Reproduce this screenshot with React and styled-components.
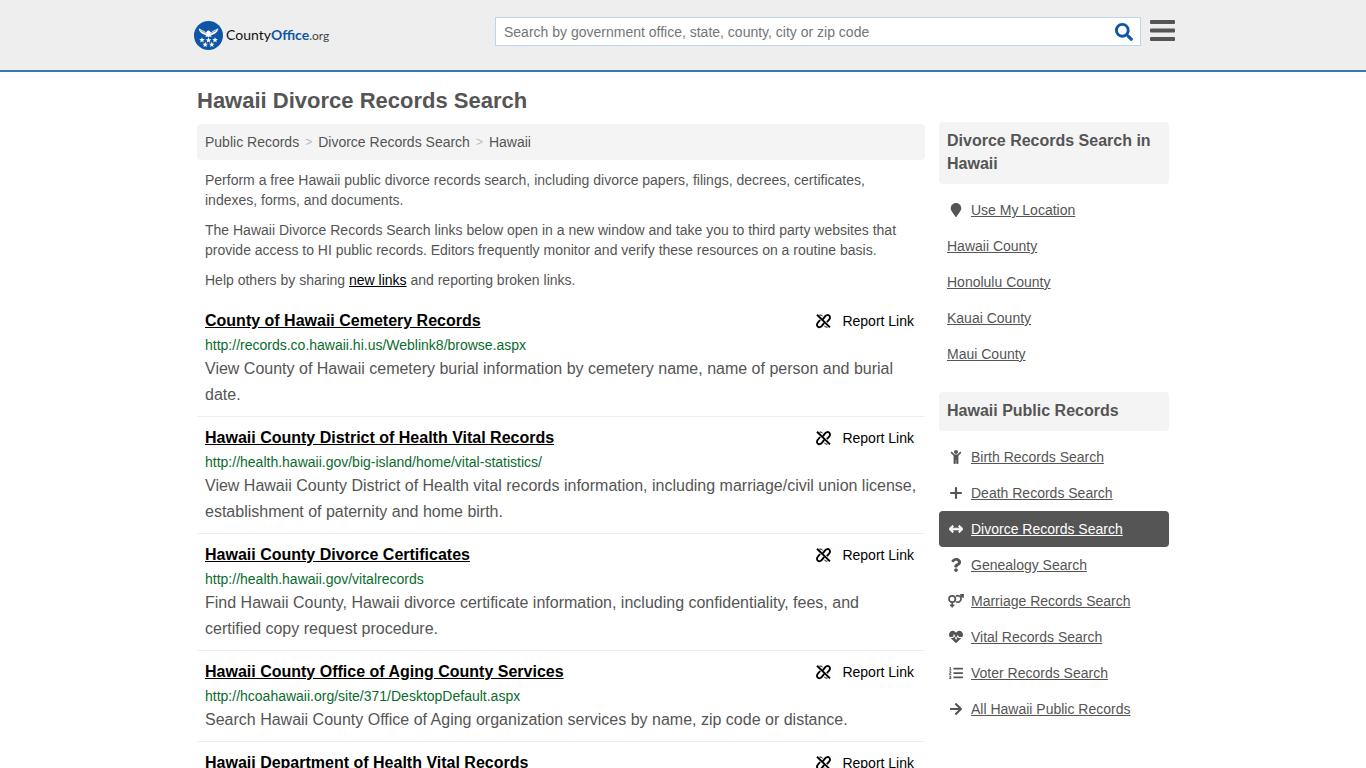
import React, { useState } from "react";
import styled, { createGlobalStyle } from "styled-components";
import {
  FaArrowRight,
  FaChild,
  FaHeartbeat,
  FaListOl,
  FaMapMarker,
  FaQuestion,
  FaSearch,
} from "react-icons/fa";
import { FaArrowsLeftRight } from "react-icons/fa6";

const GlobalStyle = createGlobalStyle`
  * {
    box-sizing: border-box;
  }

  body {
    margin: 0;
    background: #fff;
    color: #555;
    font-family: "Liberation Sans", Arial, sans-serif;
    font-size: 14px;
    line-height: 20px;
  }
`;

const Header = styled.header`
  background: #eee;
  border-bottom: 2px solid #337ab7;
`;

const HeaderInner = styled.div`
  display: flex;
  align-items: flex-start;
  justify-content: space-between;
  width: 100%;
  max-width: 984px;
  height: 70px;
  margin: 0 auto;
  padding-top: 17px;
`;

const Logo = styled.a`
  display: flex;
  align-items: center;
  gap: 3px;
  padding: 3px 0 0 3px;
  color: #111;
  font-family: Lato, sans-serif;
  font-size: 14px;
  line-height: 30px;
  text-decoration: none;

  b {
    color: #0f55a5;
  }

  small {
    color: #444;
    font-size: 12px;
  }
`;

const HeaderTools = styled.div`
  display: flex;
  gap: 9px;
  width: 680px;
`;

const SearchForm = styled.form`
  display: flex;
  flex: 1;
  height: 29px;
  background: #fff;
  border: 1px solid #bcd6ea;
`;

const SearchInput = styled.input`
  flex: 1;
  min-width: 0;
  padding: 0 8px;
  border: 0;
  outline: 0;
  background: transparent;
  color: #555;
  font: inherit;

  &::placeholder {
    color: #757575;
    opacity: 1;
  }
`;

const IconButton = styled.button`
  display: flex;
  align-items: center;
  justify-content: center;
  width: 32px;
  padding: 0;
  border: 0;
  background: none;
  color: #0f55a5;
  cursor: pointer;
`;

const MenuButton = styled(IconButton)`
  width: 25px;
  height: 27px;
  color: #555;
`;

const Page = styled.div`
  display: flex;
  gap: 14px;
  max-width: 972px;
  margin: 0 auto;
`;

const Main = styled.main`
  flex: 1;
  min-width: 0;
`;

const Title = styled.h1`
  margin: 0;
  padding: 15px 0 9px;
  font-size: 22px;
  line-height: 28px;
`;

const Breadcrumb = styled.nav`
  display: flex;
  gap: 6px;
  margin-bottom: 10px;
  padding: 8px;
  border-radius: 4px;
  background: #f4f4f4;

  a {
    color: #555;
    text-decoration: none;
  }

  span {
    color: #bbb;
    font-size: 12px;
  }
`;

const P = styled.p`
  margin: 0 8px 10px;

  a {
    color: #000;
  }
`;

const Item = styled.article`
  padding: 10px 8px 8px;
  border-bottom: 1px solid #eee;
`;

const ItemHead = styled.div`
  display: flex;
  align-items: center;
  justify-content: space-between;
  margin-bottom: 2px;
  padding-right: 3px;
  line-height: 22px;
`;

const ItemTitle = styled.h2`
  margin: 0;
  font-size: 16px;

  a {
    color: #000;
  }
`;

const Report = styled.a`
  display: flex;
  align-items: center;
  gap: 11px;
  color: #000;
  text-decoration: none;
`;

const Url = styled.div`
  color: #0a6b2d;
  line-height: 22px;
`;

const Description = styled.p`
  margin: 0;
  font-size: 16px;
  line-height: 26px;
`;

const Sidebar = styled.aside`
  width: 230px;
  padding-top: 50px;
`;

const Panel = styled.section`
  margin-bottom: 20px;
`;

const PanelTitle = styled.h3`
  margin: 0 0 8px;
  padding: 7px 8px 9px;
  border-radius: 4px;
  background: #f4f4f4;
  font-size: 16px;
  line-height: 23px;
`;

const PanelLink = styled.a`
  display: flex;
  align-items: center;
  gap: 6px;
  padding: 8px;
  border-radius: 4px;
  background: ${(props) => (props.$active ? "#555" : "transparent")};
  color: ${(props) => (props.$active ? "#fff" : "#555")};
`;

const IconBox = styled.span`
  display: flex;
  justify-content: center;
  width: 18px;
  font-size: 14px;
`;

const STAR = "0,-2.8 .8,-.9 2.8,-.8 1.2,.5 1.8,2.5 0,1.3 -1.8,2.5 -1.2,.5 -2.8,-.8 -.8,-.9";

function EagleLogo() {
  return (
    <svg width="29" height="29" viewBox="0 0 29 29" aria-hidden="true">
      <circle cx="14.5" cy="14.5" r="14.5" fill="#0f55a5" />
      <g fill="#fff">
        <path d="M4.6 7.2c2.5 1.7 5.8 2.2 7.5 4.3l1.3-1.7 1.8-.3.8 1 .9 1c1.7-2.1 5-2.6 7.5-4.3-.4 2.3-1.4 3.9-3 5-1.5 1-3.3 1.5-4.7 2.2l1.2 1.4-2.3-.3-1.1 1-1.1-1-2.3.3 1.2-1.4c-1.4-.7-3.2-1.2-4.7-2.2-1.6-1.1-2.6-2.7-3-5z" />
        {[
          [8, 19],
          [14.5, 19.2],
          [21, 19],
          [11.2, 23.6],
          [17.8, 23.6],
        ].map(([x, y]) => (
          <polygon key={x} points={STAR} transform={`translate(${x} ${y})`} />
        ))}
      </g>
      <path
        d="M6.5 9.2c2 1.7 4.6 1.6 6 3.6M22.5 9.2c-2 1.7-4.6 1.6-6 3.6"
        fill="none"
        stroke="#0f55a5"
        strokeWidth=".6"
      />
    </svg>
  );
}

function BrokenLinkIcon() {
  return (
    <svg
      width="15"
      height="16"
      viewBox="0 0 15 16"
      fill="none"
      stroke="currentColor"
      strokeWidth="1.9"
      aria-hidden="true"
    >
      <path d="M1 1.8L14 14.4" />
      <path d="M6.8 6.3l2.3-2.9c1.2-1.5 3-1.8 4.1-.8 1.1 1 1.1 2.7-.1 4L10.9 9.2" />
      <path d="M8.2 9.9l-2.3 2.9c-1.2 1.5-3 1.8-4.1.8-1.1-1-1.1-2.7.1-4L4.1 7" />
      <path d="M3.4 2.2c1.1-.3 2.3 0 3.2.9M11.6 14c-1.1.3-2.3 0-3.2-.9" strokeWidth="1" />
    </svg>
  );
}

function PlusIcon() {
  return (
    <svg
      width="14"
      height="14"
      viewBox="0 0 14 14"
      stroke="currentColor"
      strokeWidth="2.2"
      strokeLinecap="round"
      aria-hidden="true"
    >
      <path d="M7 2v10M2 7h10" />
    </svg>
  );
}

function MarriageIcon() {
  return (
    <svg
      width="16"
      height="14"
      viewBox="0 0 16 14"
      fill="none"
      stroke="currentColor"
      strokeWidth="1.7"
      aria-hidden="true"
    >
      <circle cx="4.2" cy="5" r="3.2" />
      <path d="M4.2 8.2v5.4M2 11.3h4.4M8 2.2a3.2 3.2 0 1 1 0 5.4M12 3.6L14.8.9M12.2.9h2.9v2.9" />
    </svg>
  );
}

const counties = ["Hawaii County", "Honolulu County", "Kauai County", "Maui County"];

const records = [
  { name: "Birth Records Search", icon: <FaChild /> },
  { name: "Death Records Search", icon: <PlusIcon /> },
  {
    name: "Divorce Records Search",
    icon: <FaArrowsLeftRight stroke="currentColor" strokeWidth="24" />,
    active: true,
  },
  { name: "Genealogy Search", icon: <FaQuestion /> },
  { name: "Marriage Records Search", icon: <MarriageIcon /> },
  { name: "Vital Records Search", icon: <FaHeartbeat /> },
  { name: "Voter Records Search", icon: <FaListOl /> },
  { name: "All Hawaii Public Records", icon: <FaArrowRight /> },
];

const results = [
  {
    title: "County of Hawaii Cemetery Records",
    url: "http://records.co.hawaii.hi.us/Weblink8/browse.aspx",
    text: "View County of Hawaii cemetery burial information by cemetery name, name of person and burial date.",
  },
  {
    title: "Hawaii County District of Health Vital Records",
    url: "http://health.hawaii.gov/big-island/home/vital-statistics/",
    text: "View Hawaii County District of Health vital records information, including marriage/civil union license, establishment of paternity and home birth.",
  },
  {
    title: "Hawaii County Divorce Certificates",
    url: "http://health.hawaii.gov/vitalrecords",
    text: "Find Hawaii County, Hawaii divorce certificate information, including confidentiality, fees, and certified copy request procedure.",
  },
  {
    title: "Hawaii County Office of Aging County Services",
    url: "http://hcoahawaii.org/site/371/DesktopDefault.aspx",
    text: "Search Hawaii County Office of Aging organization services by name, zip code or distance.",
  },
  { title: "Hawaii Department of Health Vital Records" },
];

function SiteHeader() {
  const [query, setQuery] = useState("");

  return (
    <Header>
      <HeaderInner>
        <Logo href="#">
          <EagleLogo />
          <span>
            County<b>Office</b>
            <small>.org</small>
          </span>
        </Logo>
        <HeaderTools>
          <SearchForm onSubmit={(e) => e.preventDefault()}>
            <SearchInput
              type="text"
              aria-label="Search"
              placeholder="Search by government office, state, county, city or zip code"
              value={query}
              onChange={(e) => setQuery(e.target.value)}
            />
            <IconButton type="submit" aria-label="Search">
              <FaSearch size={18} />
            </IconButton>
          </SearchForm>
          <MenuButton type="button" aria-label="Menu">
            <svg width="25" height="21" viewBox="0 0 25 21" fill="currentColor">
              <rect width="25" height="4" rx="1" />
              <rect y="8.5" width="25" height="4" rx="1" />
              <rect y="17" width="25" height="4" rx="1" />
            </svg>
          </MenuButton>
        </HeaderTools>
      </HeaderInner>
    </Header>
  );
}

function Result({ title, url, text }) {
  return (
    <Item>
      <ItemHead>
        <ItemTitle>
          <a href="#">{title}</a>
        </ItemTitle>
        <Report href="#">
          <BrokenLinkIcon />
          Report Link
        </Report>
      </ItemHead>
      {url && <Url>{url}</Url>}
      {text && <Description>{text}</Description>}
    </Item>
  );
}

function App() {
  return (
    <>
      <GlobalStyle />
      <SiteHeader />
      <Page>
        <Main>
          <Title>Hawaii Divorce Records Search</Title>
          <Breadcrumb>
            <a href="#">Public Records</a>
            <span>&gt;</span>
            <a href="#">Divorce Records Search</a>
            <span>&gt;</span>
            <a href="#">Hawaii</a>
          </Breadcrumb>
          <P>
            Perform a free Hawaii public divorce records search, including divorce papers, filings,
            decrees, certificates, indexes, forms, and documents.
          </P>
          <P>
            The Hawaii Divorce Records Search links below open in a new window and take you to third
            party websites that provide access to HI public records. Editors frequently monitor and
            verify these resources on a routine basis.
          </P>
          <P>
            Help others by sharing <a href="#">new links</a> and reporting broken links.
          </P>
          {results.map((result) => (
            <Result key={result.title} {...result} />
          ))}
        </Main>
        <Sidebar>
          <Panel>
            <PanelTitle>Divorce Records Search in Hawaii</PanelTitle>
            <PanelLink href="#">
              <IconBox>
                <FaMapMarker />
              </IconBox>
              Use My Location
            </PanelLink>
            {counties.map((county) => (
              <PanelLink key={county} href="#">
                {county}
              </PanelLink>
            ))}
          </Panel>
          <Panel>
            <PanelTitle>Hawaii Public Records</PanelTitle>
            {records.map((record) => (
              <PanelLink key={record.name} href="#" $active={record.active}>
                <IconBox>{record.icon}</IconBox>
                {record.name}
              </PanelLink>
            ))}
          </Panel>
        </Sidebar>
      </Page>
    </>
  );
}

export default App;
